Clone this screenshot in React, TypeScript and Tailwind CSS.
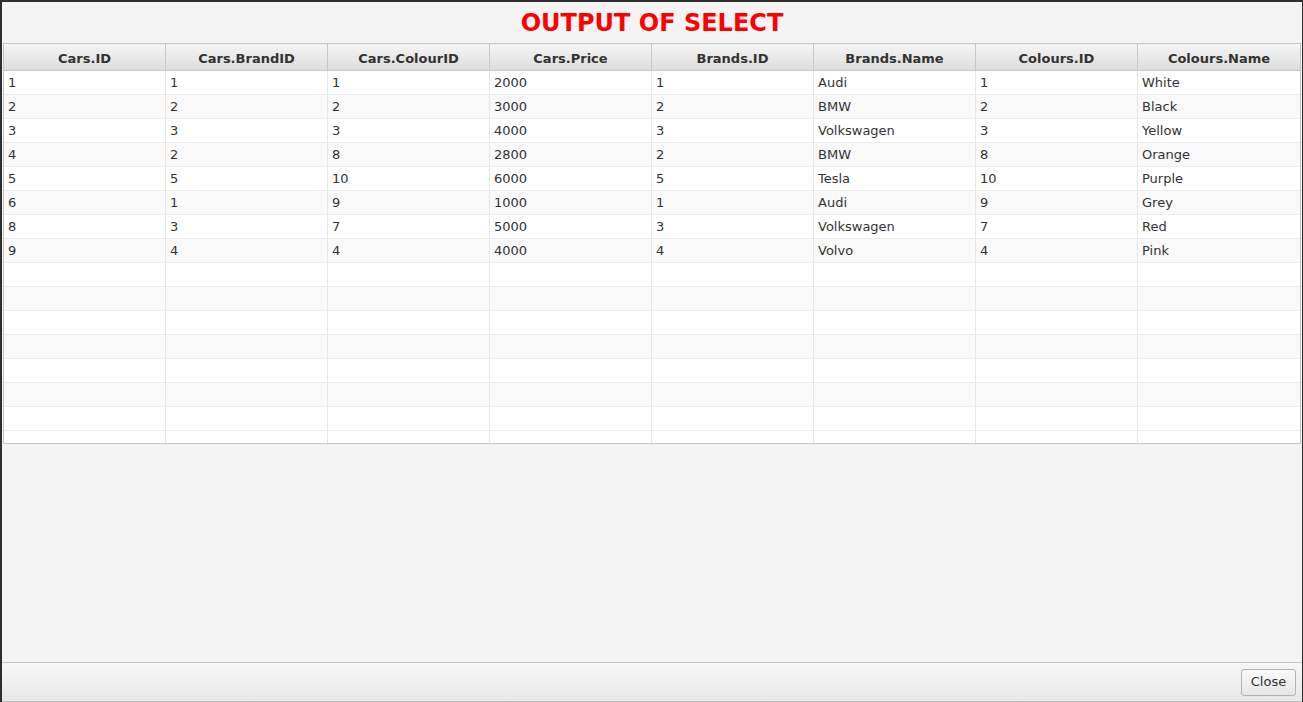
import React from "react";

const headers = ["Cars.ID","Cars.BrandID","Cars.ColourID","Cars.Price","Brands.ID","Brands.Name","Colours.ID","Colours.Name"];
const rows: string[][] = [
  ["1","1","1","2000","1","Audi","1","White"],
  ["2","2","2","3000","2","BMW","2","Black"],
  ["3","3","3","4000","3","Volkswagen","3","Yellow"],
  ["4","2","8","2800","2","BMW","8","Orange"],
  ["5","5","10","6000","5","Tesla","10","Purple"],
  ["6","1","9","1000","1","Audi","9","Grey"],
  ["8","3","7","5000","3","Volkswagen","7","Red"],
  ["9","4","4","4000","4","Volvo","4","Pink"],
];
const empty = Array.from({ length: 7 }, () => Array(8).fill(""));
const all = [...rows, ...empty];

export default function App() {
  return (
    <div className="w-[1303px] h-[702px] bg-[#2e2e2e] pt-[2px] pl-[2px] pr-[1px] overflow-hidden" style={{ fontFamily: '"DejaVu Sans", sans-serif' }}>
      <div className="w-full h-[700px] bg-[#f4f4f4] flex flex-col">
        <div className="h-[41px] flex items-center justify-center">
          <span className="text-[24px] font-bold text-[#ff0000] leading-none">OUTPUT OF SELECT</span>
        </div>
        <div className="mx-[1px] border border-[#c4c4c4] h-[401px] bg-white overflow-hidden">
          <div className="grid grid-cols-8 h-[27px] bg-gradient-to-b from-[#f5f5f5] to-[#dddddd] border-b border-[#c8c8c8]">
            {headers.map((h, i) => (
              <div key={i} className={`flex items-center justify-center pt-[3px] text-[13px] font-bold text-[#333] ${i < 7 ? "border-r border-[#c8c8c8]" : ""}`}>{h}</div>
            ))}
          </div>
          {all.map((r, ri) => (
            <div key={ri} className={`grid grid-cols-8 h-[24px] border-b border-[#ececec] ${ri % 2 === 0 ? "bg-white" : "bg-[#f9f9f9]"}`}>
              {r.map((c, ci) => (
                <div key={ci} className={`flex items-center pl-[4px] text-[13px] text-[#333] ${ci < 7 ? "border-r border-[#e6e6e6]" : ""}`}>{c}</div>
              ))}
            </div>
          ))}
          <div className="grid grid-cols-8 h-[12px] bg-white">
            {headers.map((_, ci) => (
              <div key={ci} className={ci < 7 ? "border-r border-[#e6e6e6]" : ""} />
            ))}
          </div>
        </div>
        <div className="flex-1" />
        <div className="h-[40px] border-t border-[#c4c4c4] border-b border-b-[#bdbdbd] bg-gradient-to-b from-[#f7f7f7] to-[#e8e8e8] flex items-center justify-end pr-[6px]">
          <button className="w-[55px] h-[27px] rounded-[3px] border border-[#b3b3b3] bg-gradient-to-b from-[#fafafa] to-[#e6e6e6] text-[13px] text-[#333]">Close</button>
        </div>
      </div>
    </div>
  );
}
